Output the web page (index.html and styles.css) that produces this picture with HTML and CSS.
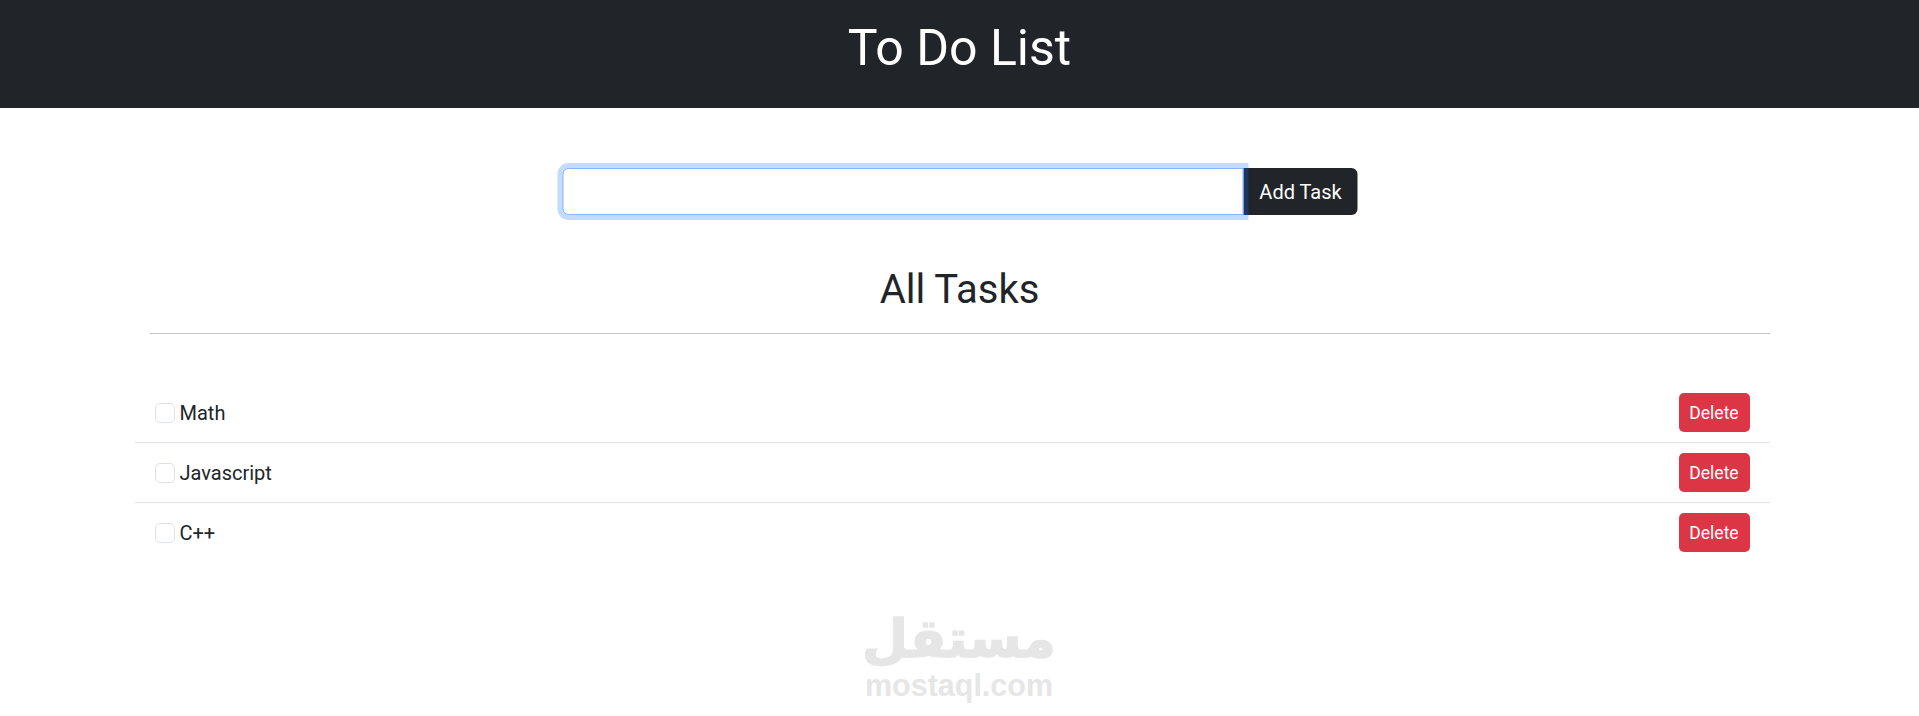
FILE: index.html
```html
<!DOCTYPE html>
<html lang="en">
<head>
    <meta charset="UTF-8">
    <meta name="viewport" content="width=device-width, initial-scale=1.0">
    <title>To Do List</title>
    <link rel="stylesheet" href="styles.css">
</head>
<body>
    <header class="top-bar">
        <h1>To Do List</h1>
    </header>

    <form class="add-form">
        <input type="text" class="task-input">
        <button type="button" class="add-button">Add Task</button>
    </form>

    <main class="tasks">
        <h2>All Tasks</h2>
        <hr class="divider">
        <ul class="task-list">
            <li class="task">
                <label class="task-label"><input type="checkbox" class="task-check"> Math</label>
                <button type="button" class="delete-button">Delete</button>
            </li>
            <li class="task">
                <label class="task-label"><input type="checkbox" class="task-check"> Javascript</label>
                <button type="button" class="delete-button">Delete</button>
            </li>
            <li class="task">
                <label class="task-label"><input type="checkbox" class="task-check"> C++</label>
                <button type="button" class="delete-button">Delete</button>
            </li>
        </ul>
    </main>

    <div class="watermark">
        <span class="watermark-ar" lang="ar" dir="rtl">مستقل</span>
        <span class="watermark-en">mostaql.com</span>
    </div>
</body>
</html>
```

FILE: styles.css
```css
* {
    box-sizing: border-box;
}

body {
    margin: 0;
    background: white;
    color: #212529;
    font-family: Roboto, "Liberation Sans", sans-serif;
    font-size: 20px;
    line-height: 1.5;
    height: 716px;
    overflow: hidden;
    position: relative;
}

.top-bar {
    background: #212529;
    color: white;
    height: 108px;
    padding-top: 18px;
    text-align: center;
}

.top-bar h1 {
    margin: 0;
    font-size: 50px;
    font-weight: 400;
    line-height: 1.2;
}

.add-form {
    display: flex;
    width: 795px;
    margin: 60px auto 0 auto;
    transform: translateX(0.5px);
}

.task-input {
    flex: 1;
    height: 47px;
    border: 1px solid #86b7fe;
    border-radius: 6px 0 0 6px;
    box-shadow: 0 0 0 5px rgba(13, 110, 253, 0.25);
    outline: none;
    position: relative;
    z-index: 1;
}

.add-button {
    width: 114px;
    border: none;
    border-radius: 0 6px 6px 0;
    background: #212529;
    color: white;
    font-family: inherit;
    font-size: 20px;
}

.tasks {
    width: 1620px;
    margin: 0 auto;
    text-align: center;
}

.tasks h2 {
    margin: 0;
    padding-top: 51px;
    font-size: 40px;
    font-weight: 400;
    line-height: 1.2;
}

.divider {
    margin: 19px 0 0 0;
    border: none;
    border-top: 1px solid #c8c8c8;
}

.task-list {
    list-style: none;
    margin: 49px 0 0 -15px;
    padding: 0;
}

.task {
    display: flex;
    justify-content: space-between;
    align-items: center;
    padding: 10px 20px;
    border-bottom: 1px solid #dee2e6;
}

.task:last-child {
    border-bottom: none;
}

.task-label {
    display: flex;
    align-items: center;
    gap: 5px;
}

.task-check {
    appearance: none;
    width: 20px;
    height: 20px;
    margin: 0;
    border: 1px solid #dee2e6;
    border-radius: 5px;
    background: white;
}

.delete-button {
    height: 39px;
    width: 71px;
    padding: 0;
    border: none;
    border-radius: 5px;
    background: #dc3545;
    color: white;
    font-family: inherit;
    font-size: 17.5px;
}

.watermark {
    position: absolute;
    left: 859px;
    top: 608px;
    width: 200px;
    display: flex;
    flex-direction: column;
    align-items: center;
    color: #e6e6e6;
    font-weight: 700;
}

.watermark-ar {
    font-family: "DejaVu Sans", sans-serif;
    font-size: 53px;
    line-height: 62px;
    -webkit-text-stroke: 1.5px #e6e6e6;
}

.watermark-en {
    font-family: "Liberation Sans", sans-serif;
    font-size: 30.5px;
    line-height: 30px;
}
```
